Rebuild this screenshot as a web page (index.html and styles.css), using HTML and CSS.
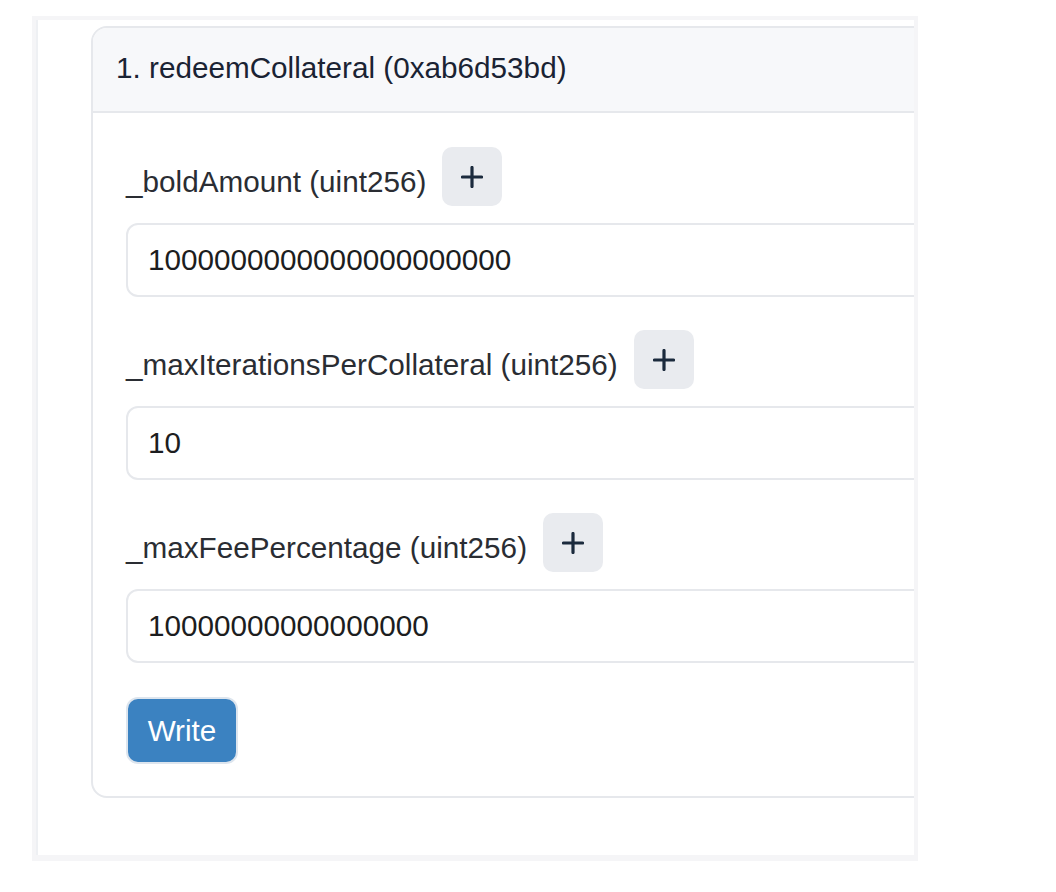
FILE: index.html
```html
<!DOCTYPE html>
<html lang="en">
<head>
<meta charset="utf-8">
<title>redeemCollateral</title>
<link rel="stylesheet" href="styles.css">
</head>
<body>
<div class="frame">
  <div class="card">
    <div class="card-header">1. redeemCollateral (0xab6d53bd)</div>
    <div class="card-body">
      <div class="field">
        <div class="label-row">
          <label class="label">_boldAmount (uint256)</label>
          <button class="add-btn" type="button" aria-label="add">
            <svg width="22" height="22" viewBox="0 0 22 22"><path d="M11 1.5v19M1.5 11h19" stroke="#1b2a3d" stroke-width="3.2" stroke-linecap="round" fill="none"/></svg>
          </button>
        </div>
        <input class="input" type="text" value="1000000000000000000000">
      </div>
      <div class="field">
        <div class="label-row">
          <label class="label">_maxIterationsPerCollateral (uint256)</label>
          <button class="add-btn" type="button" aria-label="add">
            <svg width="22" height="22" viewBox="0 0 22 22"><path d="M11 1.5v19M1.5 11h19" stroke="#1b2a3d" stroke-width="3.2" stroke-linecap="round" fill="none"/></svg>
          </button>
        </div>
        <input class="input" type="text" value="10">
      </div>
      <div class="field">
        <div class="label-row">
          <label class="label">_maxFeePercentage (uint256)</label>
          <button class="add-btn" type="button" aria-label="add">
            <svg width="22" height="22" viewBox="0 0 22 22"><path d="M11 1.5v19M1.5 11h19" stroke="#1b2a3d" stroke-width="3.2" stroke-linecap="round" fill="none"/></svg>
          </button>
        </div>
        <input class="input" type="text" value="10000000000000000">
      </div>
      <button class="write-btn" type="button">Write</button>
    </div>
  </div>
</div>
</body>
</html>
```
FILE: styles.css
```css
html, body {
  margin: 0;
  padding: 0;
  background: #ffffff;
}

body {
  font-family: "Liberation Sans", Arial, Helvetica, sans-serif;
}

.frame {
  box-sizing: border-box;
  margin: 16px 0 0 32px;
  width: 886px;
  height: 845px;
  border: 4px solid #f5f5f7;
  border-bottom-width: 6px;
  box-shadow: inset 2px 0 0 #eef0f3;
  padding: 6px 0 0 55px;
  overflow: hidden;
  background: #ffffff;
}

.card {
  box-sizing: border-box;
  width: 1000px;
  border: 2px solid #e6e8ec;
  border-radius: 16px;
  background: #ffffff;
  overflow: hidden;
}

.card-header {
  background: #f7f8fa;
  border-bottom: 2px solid #e6e8ec;
  padding: 22px 23px 25px;
  font-size: 29.7px;
  line-height: 36px;
  color: #1a2333;
}

.card-body {
  padding: 34px 33px 32px;
}

.field {
  margin-bottom: 33px;
}

.label-row {
  display: flex;
  align-items: center;
  gap: 16px;
}

.label {
  font-size: 29.7px;
  line-height: 36px;
  color: #2a2d33;
  padding-top: 10px;
}

.add-btn {
  box-sizing: border-box;
  width: 60px;
  height: 59px;
  border: none;
  border-radius: 10px;
  background: #e9ebef;
  display: flex;
  align-items: center;
  justify-content: center;
  padding: 0;
}

.input {
  display: block;
  box-sizing: border-box;
  width: 100%;
  height: 74px;
  margin-top: 17px;
  border: 2px solid #e6e8ec;
  border-radius: 12px;
  padding: 0 20px;
  font-family: "Liberation Sans", Arial, Helvetica, sans-serif;
  font-size: 29.7px;
  color: #1c1d20;
  background: #ffffff;
  outline: none;
}

.write-btn {
  box-sizing: border-box;
  display: block;
  width: 112px;
  height: 67px;
  margin-top: 34px;
  border: 2px solid #dde5ee;
  border-radius: 12px;
  background: #3b82c1;
  color: #ffffff;
  font-family: "Liberation Sans", Arial, Helvetica, sans-serif;
  font-size: 29.7px;
  padding: 0;
}
```
